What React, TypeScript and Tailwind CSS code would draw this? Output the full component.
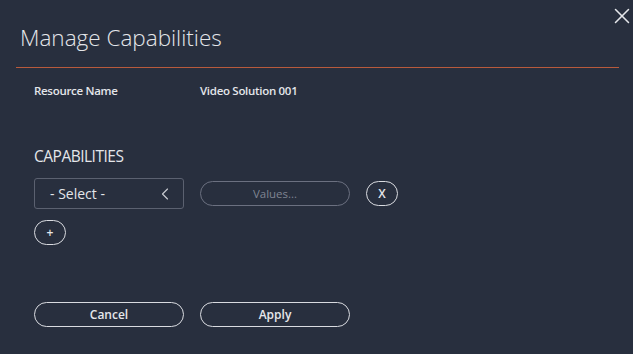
import { X, ChevronLeft } from 'lucide-react'

const font = { fontFamily: '"Open Sans", "Noto Sans", sans-serif' }

function PillButton({ label, className = '' }: { label: string; className?: string }) {
  return (
    <button
      type="button"
      className={`flex h-[25px] items-center justify-center rounded-full border border-[#d9dbe0] text-[12px] font-semibold text-[#e6e7ea] ${className}`}
    >
      {label}
    </button>
  )
}

export default function App() {
  return (
    <div className="relative h-[354px] w-[633px] overflow-hidden bg-[#282f3e]" style={font}>
      <button type="button" className="absolute right-[-2px] top-[3px] text-[#e4e6ea]">
        <X className="size-[26px]" strokeWidth={1.4} aria-hidden="true" />
      </button>

      <div className="px-[16px] pt-[23px]">
        <h1 className="pl-[4px] text-[22.5px] font-light leading-[30px] text-[#e4e6ea]">
          Manage Capabilities
        </h1>
        <div className="mr-[-2px] mt-[14px] h-px bg-[#b85a3c]" />
      </div>

      <div className="mt-[14px] flex px-[34px] text-[11.5px] font-semibold tracking-[-0.3px] text-[#e4e6ea]">
        <span className="w-[166px]">Resource Name</span>
        <span>Video Solution 001</span>
      </div>

      <div className="mt-[47px] px-[34px]">
        <h2 className="text-[15.5px] leading-[20px] tracking-[-0.5px] text-[#e4e6ea]">CAPABILITIES</h2>

        <div className="mt-[12px] flex items-center">
          <div className="flex h-[31px] w-[150px] items-center justify-between rounded-[3px] border border-[#5b6170] pl-[15px] pr-[8px] text-[14px] text-[#e4e6ea]">
            <span>- Select -</span>
            <ChevronLeft className="size-[20px] text-[#c8cad0]" strokeWidth={1.4} aria-hidden="true" />
          </div>
          <div className="ml-[16px] flex h-[25px] w-[150px] items-center justify-center rounded-full border border-[#6b7080] text-[11.5px] text-[#7f8492]">
            Values...
          </div>
          <PillButton label="X" className="ml-[16px] w-[32px]" />
        </div>

        <PillButton label="+" className="mt-[11px] w-[32px] text-[10px]" />

        <div className="mt-[57px] flex gap-[16px]">
          <PillButton label="Cancel" className="w-[150px]" />
          <PillButton label="Apply" className="w-[150px]" />
        </div>
      </div>
    </div>
  )
}
